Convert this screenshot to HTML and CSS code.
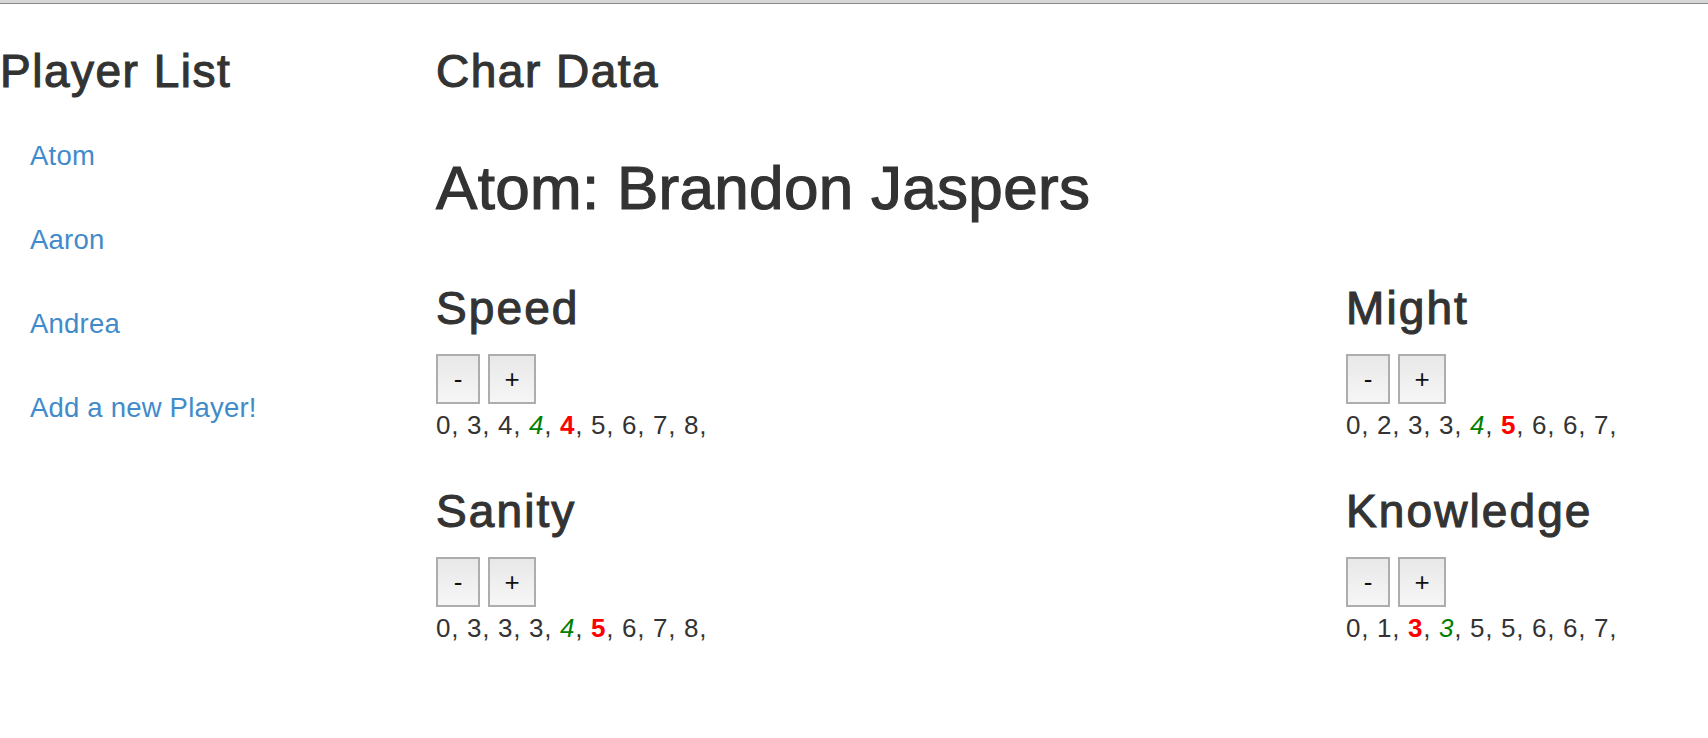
FILE: index.html
```html
<!DOCTYPE html>
<html lang="en">
<head>
<meta charset="utf-8">
<title>Char Data</title>
<link rel="stylesheet" href="styles.css">
</head>
<body>
<div class="topbar"></div>
<div class="page">
  <aside class="sidebar">
    <h2 class="title">Player List</h2>
    <ul class="players">
      <li><a href="#">Atom</a></li>
      <li><a href="#">Aaron</a></li>
      <li><a href="#">Andrea</a></li>
      <li><a href="#">Add a new Player!</a></li>
    </ul>
  </aside>
  <main class="main">
    <h2 class="title">Char Data</h2>
    <h1 class="char-name">Atom: Brandon Jaspers</h1>
    <div class="stats">
      <section class="stat">
        <h3 class="stat-name">Speed</h3>
        <div class="controls"><button class="btn btn-minus">-</button><button class="btn btn-plus">+</button></div>
        <div class="track">0, 3, 4, <em class="start">4</em>, <strong class="cur">4</strong>, 5, 6, 7, 8,</div>
      </section>
      <section class="stat">
        <h3 class="stat-name">Might</h3>
        <div class="controls"><button class="btn btn-minus">-</button><button class="btn btn-plus">+</button></div>
        <div class="track">0, 2, 3, 3, <em class="start">4</em>, <strong class="cur">5</strong>, 6, 6, 7,</div>
      </section>
      <section class="stat">
        <h3 class="stat-name">Sanity</h3>
        <div class="controls"><button class="btn btn-minus">-</button><button class="btn btn-plus">+</button></div>
        <div class="track">0, 3, 3, 3, <em class="start">4</em>, <strong class="cur">5</strong>, 6, 7, 8,</div>
      </section>
      <section class="stat">
        <h3 class="stat-name">Knowledge</h3>
        <div class="controls"><button class="btn btn-minus">-</button><button class="btn btn-plus">+</button></div>
        <div class="track">0, 1, <strong class="cur">3</strong>, <em class="start">3</em>, 5, 5, 6, 6, 7,</div>
      </section>
    </div>
  </main>
</div>
</body>
</html>
```

FILE: styles.css
```css
* { box-sizing: border-box; }

html, body {
  margin: 0;
  padding: 0;
  background: #ffffff;
}

body {
  font-family: "Liberation Sans", Arial, Helvetica, sans-serif;
  color: #333333;
  font-size: 26px;
}

.topbar {
  height: 4px;
  background: #d6d6d6;
  border-bottom: 1px solid #8a8a8a;
}

.page {
  display: flex;
  align-items: flex-start;
}

.sidebar {
  width: 436px;
  flex: none;
}

.main {
  flex: 1;
}

.title {
  margin: 42px 0 0 0;
  font-size: 46px;
  line-height: 50px;
  font-weight: normal;
  letter-spacing: 1.5px;
  -webkit-text-stroke: 1.1px #333333;
  color: #333333;
}

.players {
  list-style: none;
  margin: 18px 0 0 0;
  padding: 0 0 0 30px;
}

.players li {
  padding: 26px 0;
  line-height: 32px;
  font-size: 27.5px;
}

.players a {
  color: #428bca;
  text-decoration: none;
  letter-spacing: 0.2px;
}

.char-name {
  margin: 58px 0 0 0;
  font-size: 62px;
  line-height: 68px;
  font-weight: normal;
  letter-spacing: 0.3px;
  -webkit-text-stroke: 1.2px #333333;
  color: #333333;
}

.stats {
  display: grid;
  grid-template-columns: 910px auto;
  row-gap: 46px;
  margin-top: 61px;
}

.stat-name {
  margin: 0;
  font-size: 46px;
  line-height: 50px;
  font-weight: normal;
  letter-spacing: 2.1px;
  -webkit-text-stroke: 1.1px #333333;
  color: #333333;
}

.controls {
  display: flex;
  gap: 8px;
  margin-top: 21px;
}

.btn {
  height: 50px;
  margin: 0;
  padding: 0;
  border: 2px solid #adadad;
  border-radius: 0;
  background: linear-gradient(#e8e8e8, #f6f6f6);
  color: #111111;
  font-family: "Liberation Sans", Arial, Helvetica, sans-serif;
  font-size: 26px;
  line-height: 46px;
}

.btn-minus { width: 44px; }
.btn-plus { width: 48px; }

.track {
  margin-top: 6px;
  font-size: 26px;
  line-height: 30px;
  letter-spacing: 0.7px;
  white-space: nowrap;
}

.start {
  color: #008000;
  font-style: italic;
}

.cur {
  color: #ff0000;
  font-weight: bold;
}
```
